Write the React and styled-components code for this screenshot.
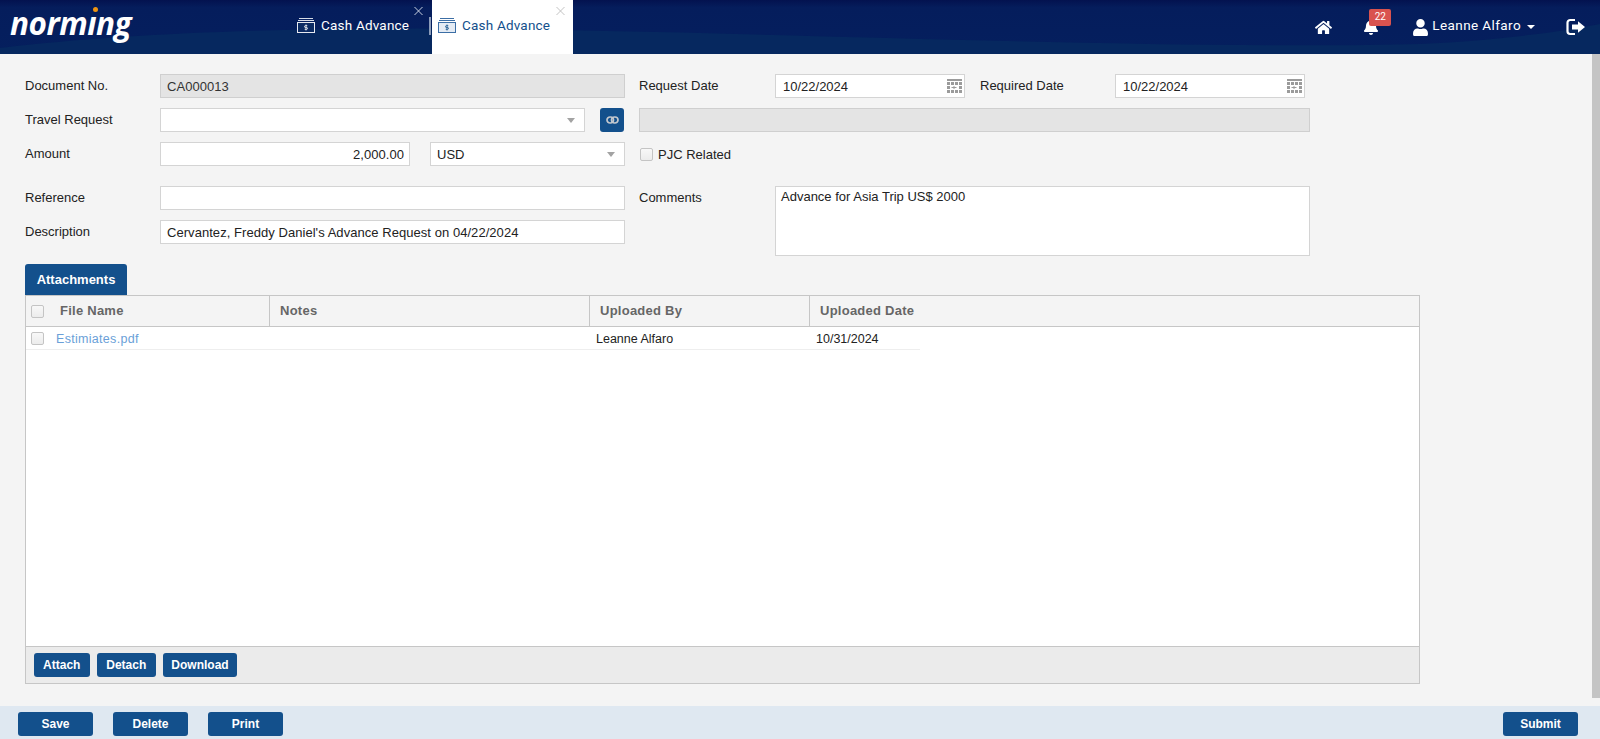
import React from "react";
import styled, { createGlobalStyle } from "styled-components";
import { FaHome, FaBell, FaUser } from "react-icons/fa";

const GlobalStyle = createGlobalStyle`
  html, body {
    margin: 0;
    padding: 0;
    height: 100%;
    overflow: hidden;
    background: #f4f4f4;
  }
  * {
    box-sizing: border-box;
  }
`;

const CashIcon = ({ active }) => (
  <CashSvg width="18" height="15" viewBox="0 0 18 15" fill="none">
    <path d="M2 .5h14M1 2.5h16" stroke={active ? "#3c6ea5" : "#d7dce6"} strokeWidth="1" />
    <rect x=".5" y="4.5" width="17" height="10" stroke={active ? "#3c6ea5" : "#e6e9f0"} fill={active ? "#e4ebf4" : "#0b2a63"} />
    <path
      d="M9 6.5v6M10.3 7.7H8.4a.9.9 0 0 0 0 1.8h1.2a.9.9 0 0 1 0 1.8H7.7"
      stroke={active ? "#13508c" : "#fff"}
      strokeWidth=".8"
    />
  </CashSvg>
);

const CloseIcon = () => (
  <svg width="9" height="8" viewBox="0 0 9 8" fill="none" stroke="currentColor" strokeWidth="0.9">
    <path d="M.5 0l8 8M8.5 0l-8 8" />
  </svg>
);

const CalendarIcon = () => (
  <svg width="15" height="14" viewBox="0 0 15 14" fill="#9b9b9b">
    <rect x="0" y="0" width="15" height="2" />
    <rect x="0" y="3" width="3" height="3" />
    <rect x="4" y="3" width="3" height="3" />
    <rect x="8" y="3" width="3" height="3" />
    <rect x="12" y="3" width="3" height="3" />
    <rect x="0" y="7" width="3" height="3" />
    <path d="M4.5 8h2V7h1v1h2v1h-2v1h-1V9h-2z" />
    <rect x="12" y="7" width="3" height="3" />
    <rect x="0" y="11" width="3" height="3" />
    <rect x="4" y="11" width="3" height="3" />
    <rect x="8" y="11" width="3" height="3" />
    <rect x="12" y="11" width="3" height="3" />
  </svg>
);

const LinkIcon = () => (
  <svg width="13" height="8" viewBox="0 0 13 8" fill="none" stroke="#c4c8ce" strokeWidth="1.7">
    <rect x="1" y="1" width="6.5" height="6" rx="3" />
    <rect x="5.5" y="1" width="6.5" height="6" rx="3" />
  </svg>
);

const LogoutIcon = () => (
  <svg width="19" height="18" viewBox="0 0 19 18" fill="#fff">
    <path d="M9 2H4.2A2.7 2.7 0 0 0 1.5 4.7v8.6A2.7 2.7 0 0 0 4.2 16H9" fill="none" stroke="#fff" strokeWidth="2.2" />
    <path d="M6 6.6h6V3.2l7 5.8-7 5.8v-3.4H6z" />
  </svg>
);

const App = () => {
  const files = [
    { id: 1, name: "Estimiates.pdf", notes: "", by: "Leanne Alfaro", date: "10/31/2024" },
  ];

  return (
    <Page>
      <GlobalStyle />
      <Header>
        <HeaderWave viewBox="0 0 1600 54" preserveAspectRatio="none">
          <path d="M0 48C150 30 350 26 560 30C800 34 1200 50 1420 44C1500 40 1560 32 1600 24V54H0Z" fill="#06285f" />
        </HeaderWave>
        <Logo>
          norm<LogoI>ı<LogoDot /></LogoI>ng
        </Logo>
        <Tabs>
          <Tab>
            <CashIcon />
            <span>Cash Advance</span>
            <TabClose><CloseIcon /></TabClose>
          </Tab>
          <TabDivider />
          <Tab active>
            <CashIcon active />
            <span>Cash Advance</span>
            <TabClose active><CloseIcon /></TabClose>
          </Tab>
        </Tabs>
        <HeaderRight>
          <NavIcon><FaHome size={17} /></NavIcon>
          <BellWrap>
            <FaBell size={16} />
            <Badge>22</Badge>
          </BellWrap>
          <UserMenu>
            <FaUser size={17} />
            <span>Leanne Alfaro</span>
            <Caret />
          </UserMenu>
          <NavIcon><LogoutIcon /></NavIcon>
        </HeaderRight>
      </Header>

      <Main>
        <Form>
          <FormLeft>
            <Field>
              <Label>Document No.</Label>
              <Input readOnly disabled value="CA000013" />
            </Field>
            <Field>
              <Label>Travel Request</Label>
              <SelectBox grow>
                <Arrow />
              </SelectBox>
              <LinkButton><LinkIcon /></LinkButton>
            </Field>
            <Field spaced>
              <Label>Amount</Label>
              <AmountInput readOnly value="2,000.00" />
              <SelectBox width="194.5px">
                USD
                <Arrow />
              </SelectBox>
            </Field>
            <Field>
              <Label>Reference</Label>
              <Input readOnly value="" />
            </Field>
            <Field>
              <Label>Description</Label>
              <Input readOnly value="Cervantez, Freddy Daniel's Advance Request on 04/22/2024" />
            </Field>
          </FormLeft>
          <FormRight>
            <Field>
              <SideLabel>Request Date</SideLabel>
              <DateBox>
                10/22/2024
                <CalendarIcon />
              </DateBox>
              <DateLabel>Required Date</DateLabel>
              <DateBox>
                10/22/2024
                <CalendarIcon />
              </DateBox>
            </Field>
            <Field>
              <Input readOnly disabled value="" />
            </Field>
            <Field spaced>
              <CheckLabel>
                <Check />
                PJC Related
              </CheckLabel>
            </Field>
            <CommentField>
              <CommentLabel>Comments</CommentLabel>
              <Comments>Advance for Asia Trip US$ 2000</Comments>
            </CommentField>
          </FormRight>
        </Form>

        <TabBar>
          <AttachTab>Attachments</AttachTab>
        </TabBar>
        <Grid>
          <GridHead>
            <CheckCell><Check /></CheckCell>
            <HeadCell width="213px">File Name</HeadCell>
            <HeadCell width="320px">Notes</HeadCell>
            <HeadCell width="220px">Uploaded By</HeadCell>
            <HeadCell width="220px" last>Uploaded Date</HeadCell>
          </GridHead>
          <GridBody>
            {files.map((file) => (
              <GridRow key={file.id}>
                <CheckCell row><Check /></CheckCell>
                <RowCell width="226px" first><FileLink>{file.name}</FileLink></RowCell>
                <RowCell width="308px">{file.notes}</RowCell>
                <RowCell width="220px">{file.by}</RowCell>
                <RowCell width="105px">{file.date}</RowCell>
              </GridRow>
            ))}
          </GridBody>
          <GridFooter>
            <SmallButton width="55.5px">Attach</SmallButton>
            <SmallButton width="58.5px">Detach</SmallButton>
            <SmallButton width="74px">Download</SmallButton>
          </GridFooter>
        </Grid>
        <Scrollbar />
      </Main>

      <Footer>
        <FooterGroup>
          <ActionButton>Save</ActionButton>
          <ActionButton>Delete</ActionButton>
          <ActionButton>Print</ActionButton>
        </FooterGroup>
        <ActionButton>Submit</ActionButton>
      </Footer>
    </Page>
  );
};

const Page = styled.div`
  height: 739px;
  width: 1600px;
  display: flex;
  flex-direction: column;
  font-family: "Liberation Sans", Arial, sans-serif;
  font-size: 13px;
  color: #222;
  background: #f4f4f4;
`;

const Header = styled.header`
  position: relative;
  height: 54px;
  flex: none;
  display: flex;
  align-items: stretch;
  color: #fff;
  background: linear-gradient(180deg, #03124f 0, #051d5c 14%, #051f5e 100%);
`;

const HeaderWave = styled.svg`
  position: absolute;
  left: 0;
  top: 0;
  width: 100%;
  height: 100%;
`;

const CashSvg = styled.svg`
  flex: none;
  margin-top: 1px;
`;

const Logo = styled.div`
  position: relative;
  width: 291px;
  padding: 3px 0 0 10px;
  flex: none;
  font-family: "Open Sans", sans-serif;
  font-style: italic;
  font-weight: 700;
  font-size: 31.5px;
  line-height: 40px;
  letter-spacing: -0.5px;
  color: #fff;
`;

const LogoI = styled.span`
  position: relative;
`;

const LogoDot = styled.i`
  position: absolute;
  left: 6px;
  top: 6px;
  width: 5px;
  height: 5px;
  border-radius: 50%;
  background: #ee9412;
`;

const Tabs = styled.div`
  position: relative;
  display: flex;
  align-items: stretch;
`;

const Tab = styled.div`
  position: relative;
  width: ${(props) => (props.active ? "141px" : "138px")};
  display: flex;
  align-items: center;
  gap: 6px;
  padding: 0 0 4px 6px;
  font-family: Roboto, sans-serif;
  font-size: 13.5px;
  letter-spacing: 0.2px;
  color: ${(props) => (props.active ? "#13508c" : "#fff")};
  background: ${(props) => (props.active ? "#fff" : "transparent")};
`;

const TabClose = styled.span`
  position: absolute;
  right: ${(props) => (props.active ? "8px" : "6px")};
  top: 7px;
  display: flex;
  color: ${(props) => (props.active ? "#bcbcbc" : "#dfe4ee")};
`;

const TabDivider = styled.div`
  width: 2px;
  height: 18px;
  margin: 17px 1px 0 0;
  background: #8b9bb8;
`;

const HeaderRight = styled.div`
  position: relative;
  margin-left: auto;
  display: flex;
  align-items: center;
  padding: 0 15px 0 0;
`;

const NavIcon = styled.div`
  display: flex;
  align-items: center;
  &:last-child {
    margin-left: 31px;
  }
`;

const BellWrap = styled.div`
  position: relative;
  display: flex;
  margin-left: 31px;
`;

const Badge = styled.span`
  position: absolute;
  left: 6px;
  top: -10px;
  width: 22px;
  height: 17px;
  border-radius: 2px;
  background: #d9534f;
  color: #fff;
  font-family: Roboto, sans-serif;
  font-size: 10px;
  line-height: 16px;
  text-align: center;
`;

const UserMenu = styled.div`
  display: flex;
  align-items: center;
  gap: 3px;
  margin-left: 33px;
  font-family: Roboto, sans-serif;
  font-size: 13.5px;
  letter-spacing: 0.4px;
  & > span {
    margin: 0 2px 4px 0;
  }
`;

const Caret = styled.i`
  width: 0;
  height: 0;
  margin-left: 1px;
  border-left: 4px solid transparent;
  border-right: 4px solid transparent;
  border-top: 4px solid #fff;
`;

const Main = styled.main`
  position: relative;
  flex: 1;
  padding: 20px 0 0 25px;
`;

const Form = styled.div`
  display: flex;
  gap: 14.5px;
`;

const FormLeft = styled.div`
  width: 599.5px;
  flex: none;
`;

const FormRight = styled.div`
  width: 670.5px;
  flex: none;
`;

const Field = styled.div`
  display: flex;
  align-items: center;
  height: 24px;
  margin-bottom: ${(props) => (props.spaced ? "20px" : "10px")};
`;

const CommentField = styled.div`
  display: flex;
  align-items: flex-start;
  height: 70px;
  line-height: 24px;
`;

const Label = styled.label`
  width: 135px;
  flex: none;
  padding-bottom: 2px;
  font-size: 13px;
`;

const SideLabel = styled.label`
  width: 136px;
  flex: none;
  padding-bottom: 2px;
  font-size: 13px;
`;

const CommentLabel = styled(SideLabel)`
  padding-bottom: 0;
`;

const DateLabel = styled.label`
  width: 150px;
  flex: none;
  padding: 0 0 2px 15px;
  font-size: 13px;
`;

const Input = styled.input`
  flex: 1;
  min-width: 0;
  height: 24px;
  padding: 0 6px;
  border: 1px solid #d4d4d4;
  border-radius: 0;
  outline: none;
  background: #fff;
  color: #222;
  font-family: inherit;
  font-size: 13px;
  letter-spacing: 0.05px;
  &:disabled {
    background: #e4e4e4;
    border-color: #cfcfcf;
    color: #333;
    opacity: 1;
  }
`;

const AmountInput = styled(Input)`
  flex: none;
  width: 250px;
  margin-right: 20px;
  padding-right: 5px;
  text-align: right;
`;

const SelectBox = styled.div`
  flex: ${(props) => (props.grow ? "1" : "none")};
  width: ${(props) => props.width || "auto"};
  height: 24px;
  display: flex;
  align-items: center;
  justify-content: space-between;
  padding: 0 6px;
  border: 1px solid #d4d4d4;
  background: #fff;
`;

const Arrow = styled.i`
  margin-left: auto;
  margin-right: 3px;
  width: 0;
  height: 0;
  border-left: 4px solid transparent;
  border-right: 4px solid transparent;
  border-top: 5px solid #a3a3a3;
`;

const LinkButton = styled.button`
  width: 24px;
  height: 24px;
  flex: none;
  margin-left: 15.5px;
  margin-right: 0.5px;
  padding: 0;
  display: flex;
  align-items: center;
  justify-content: center;
  border: none;
  border-radius: 3px;
  background: #13508c;
`;

const DateBox = styled.div`
  width: 190px;
  height: 24px;
  flex: none;
  display: flex;
  align-items: center;
  justify-content: space-between;
  padding: 0 2px 0 7px;
  border: 1px solid #d4d4d4;
  background: #fff;
`;

const CheckLabel = styled.label`
  display: flex;
  align-items: center;
  gap: 5px;
  padding-left: 1px;
`;

const Check = styled.span`
  display: block;
  width: 13px;
  height: 13px;
  flex: none;
  border: 1px solid #c4c4c4;
  border-radius: 2px;
  background: linear-gradient(180deg, #f8f8f8, #ececec);
`;

const Comments = styled.div`
  flex: 1;
  height: 70px;
  padding: 1px 5px;
  border: 1px solid #d4d4d4;
  background: #fff;
  line-height: 17px;
`;

const TabBar = styled.div`
  display: flex;
  margin-top: 8px;
`;

const AttachTab = styled.div`
  width: 102px;
  height: 31px;
  border-radius: 3px 3px 0 0;
  background: #13508c;
  color: #fff;
  font-size: 13px;
  font-weight: 700;
  line-height: 32px;
  text-align: center;
`;

const Grid = styled.div`
  width: 1395px;
  height: 389px;
  display: flex;
  flex-direction: column;
  border: 1px solid #c6c6c6;
`;

const GridHead = styled.div`
  height: 31px;
  flex: none;
  display: flex;
  align-items: stretch;
  background: #f4f4f4;
  border-bottom: 1px solid #c6c6c6;
`;

const CheckCell = styled.div`
  width: ${(props) => (props.row ? "30px" : "31px")};
  flex: none;
  display: flex;
  align-items: center;
  padding-left: 5px;
`;

const HeadCell = styled.div`
  width: ${(props) => props.width};
  flex: none;
  padding-left: 3px;
  border-right: ${(props) => (props.last ? "none" : "1px solid #c6c6c6")};
  color: #666;
  font-weight: 700;
  font-size: 13px;
  letter-spacing: 0.25px;
  line-height: 30px;

  & + & {
    padding-left: 10px;
  }
`;

const GridBody = styled.div`
  flex: 1;
  background: #fff;
`;

const GridRow = styled.div`
  width: 894px;
  height: 23px;
  display: flex;
  align-items: center;
  border-bottom: 1px solid #eeeeee;
`;

const RowCell = styled.div`
  width: ${(props) => props.width};
  flex: none;
  padding: 1px 0 0 ${(props) => (props.first ? "0" : "6px")};
  font-size: 12.5px;
  white-space: nowrap;
`;

const FileLink = styled.a`
  color: #6a9fd8;
  letter-spacing: 0.3px;
`;

const GridFooter = styled.div`
  height: 37px;
  flex: none;
  display: flex;
  align-items: center;
  gap: 7.5px;
  padding-left: 8px;
  background: #ebebeb;
  border-top: 1px solid #c6c6c6;
`;

const SmallButton = styled.button`
  width: ${(props) => props.width};
  height: 24px;
  padding: 0;
  border: none;
  border-radius: 3px;
  background: #13508c;
  color: #fff;
  font-family: inherit;
  font-size: 12px;
  font-weight: 700;
`;

const Scrollbar = styled.div`
  position: absolute;
  top: 0;
  right: 0;
  bottom: 8px;
  width: 8px;
  background: #c4c4c4;
`;

const Footer = styled.footer`
  height: 33px;
  flex: none;
  display: flex;
  align-items: center;
  justify-content: space-between;
  padding: 3px 22px 0 18px;
  background: #dfe8f1;
`;

const FooterGroup = styled.div`
  display: flex;
  gap: 20px;
`;

const ActionButton = styled.button`
  width: 75px;
  height: 24px;
  border: none;
  border-radius: 3px;
  background: #13508c;
  color: #fff;
  font-family: inherit;
  font-size: 12px;
  font-weight: 700;
`;

export default App;
